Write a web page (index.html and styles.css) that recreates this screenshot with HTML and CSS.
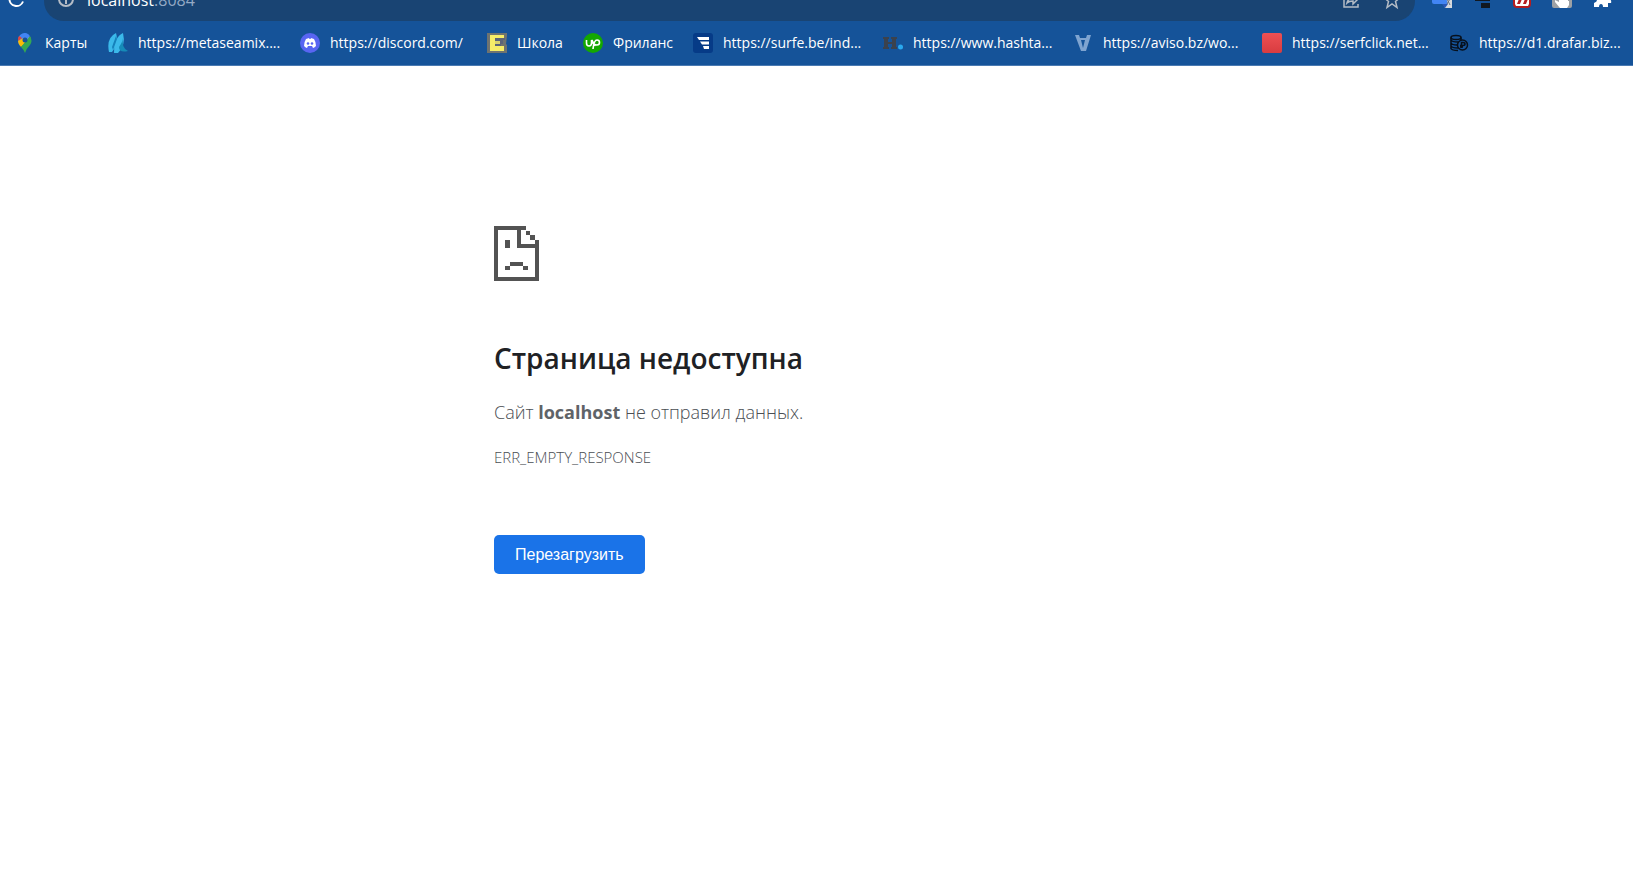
FILE: index.html
```html
<!DOCTYPE html>
<html lang="ru">
<head>
<meta charset="utf-8">
<title>localhost</title>
<link rel="stylesheet" href="styles.css">
</head>
<body>
<header class="browser">
  <div class="toolbar">
    <div class="toolbar-row">
      <button class="icon-button reload" aria-label="Обновить"><svg class="icon" viewBox="0 0 20 20"><path d="M10 1a7 7 0 1 0 7 9.500" fill="none" stroke="#fff" stroke-width="2"/></svg></button>
      <div class="omnibox">
        <svg class="icon" viewBox="0 0 20 20"><circle cx="10" cy="8" r="7" fill="none" stroke="#b4bcc6" stroke-width="2"/><path d="M10 7v6M10 3v2" stroke="#b4bcc6" stroke-width="2"/></svg>
        <p class="address">localhost<span class="port">:8084</span></p>
        <button class="icon-button" aria-label="Поделиться"><svg class="icon" viewBox="0 0 20 20"><path d="M6 3H3v13h14v-3M6 12c1-4 4-5 6-5V3l5 5-5 5v-3c-3 0-4 0-6 2z" fill="none" stroke="#b4bcc6" stroke-width="1.500"/></svg></button>
        <button class="icon-button" aria-label="В закладки"><svg class="icon" viewBox="0 0 20 20"><path d="M10 1l2 5 6 .5-4.500 4 1.500 6-5-3.500-5 3.500 1.500-6L2 6.500 8 6z" fill="none" stroke="#b4bcc6" stroke-width="1.500"/></svg></button>
      </div>
      <div class="extensions">
        <button class="icon-button" aria-label="Переводчик"><svg class="icon" viewBox="0 0 20 20"><path d="M8 2h12v15h-7z" fill="#d5d9de"/><path d="M0 0h12l4 13H2q-2 0-2-2z" fill="#4285f4"/><path d="M10 13h6l-3 4z" fill="#2957b5"/><path d="M15 8l3 6m0-6l-3 5" stroke="#68727d"/></svg></button>
        <button class="icon-button" aria-label="Расширение"><svg class="icon" viewBox="0 0 20 20"><path d="M3 6h15v4H3zM9 12h9v5H9z" fill="#111820"/></svg></button>
        <button class="icon-button" aria-label="Расширение"><svg class="icon" viewBox="0 0 20 20"><rect x="1" y="-2" width="18" height="19" rx="4" fill="#b51d20"/><path d="M3 0h14v13l-1 2H4l-1-2z" fill="#fff"/><path d="M5 13l2-5h3l-2 5zM11 13l2-5h3l-2 5z" fill="#b51d20"/></svg></button>
        <button class="icon-button" aria-label="Расширение"><svg class="icon" viewBox="0 0 20 20"><rect y="-3" width="20" height="20" rx="2" fill="#9da1a5"/><path d="M7 0h3v9h1V7h2v2h1V8h2v2h1v4l-2 3H8l-5-6v-2l4 2z" fill="#fff"/></svg></button>
        <button class="icon-button" aria-label="Расширения"><svg class="icon" viewBox="0 0 20 20"><path d="M2 3h5V1q3-3 5 0v2h5v5q3 1 2 4h-3v4h-5q0-3-2-3t-2 3H2v-4q3-1 3-3T2 7z" fill="#fff"/></svg></button>
      </div>
    </div>
  </div>
  <nav class="bookmarks" aria-label="Закладки">
    <a class="bookmark" href="#"><svg class="icon" viewBox="0 0 20 20"><path d="M10 0a7 7 0 0 0-7 7q0 3 2 6l9-11q-2-2-4-2z" fill="#4285f4"/><path d="M4 3a7 7 0 0 0-1 5l4-3z" fill="#ea4335"/><path d="M3 8q0 3 3 6l10-9-4-2z" fill="#fbbc04"/><path d="M15 3q3 5 0 9-4 4-5 8-1-3-4-6z" fill="#34a853"/><path d="M6 2q5-4 9 1l-4 5z" fill="#4285f4"/><circle cx="10" cy="7" r="2.500" fill="#155399"/></svg><span>Карты</span></a>
    <a class="bookmark" href="#"><svg class="icon" viewBox="0 0 20 20"><path d="M1 19Q-2 5 8 0q3 10-4 19z" fill="#3bb9ea"/><path d="M6 20Q6 4 15 0q3 12-5 20z" fill="#3bb9ea"/><path d="M15 2q-2 13 5 16-9 2-9-4 4-5 4-12z" fill="#168bb8"/><path d="M8 3l1 3-4 11-1-3z" fill="#1681bb"/></svg><span>https://metaseamix....</span></a>
    <a class="bookmark" href="#"><svg class="icon" viewBox="0 0 20 20"><circle cx="10" cy="10" r="10" fill="#5865f2"/><path d="M6 6l3-1 .5 1h1l.5-1 3 1q2 3 2 7-2 2-3 2l-1-2H8l-1 2q-1 0-3-2 0-4 2-7z" fill="#fff"/><circle cx="8" cy="10.500" r="1.300" fill="#5865f2"/><circle cx="12" cy="10.500" r="1.300" fill="#5865f2"/></svg><span>https://discord.com/</span></a>
    <a class="bookmark" href="#"><svg class="icon" viewBox="0 0 20 20"><path d="M0 0h20v3l-1 8 1 1v8H0z" fill="#6f7370"/><path d="M3 2h14v3H8v8h9v5H3z" fill="#f6ed68"/><path d="M8 5h10v2h-2v4h-2v2H8z" fill="#5b6479"/><path d="M8 8h5v3H8z" fill="#d9d36a"/></svg><span>Школа</span></a>
    <a class="bookmark" href="#"><svg class="icon" viewBox="0 0 20 20"><circle cx="10" cy="10" r="10" fill="#14a800"/><path d="M3.500 7v3q0 3 2.500 3t2.500-3V7q2 5 4 5.500M10 16q1-9 4-9 2.500 0 2.500 2.500T14 12q-3 0-5-5" fill="none" stroke="#fff" stroke-width="1.600"/></svg><span>Фриланс</span></a>
    <a class="bookmark" href="#"><svg class="icon" viewBox="0 0 20 20"><rect width="20" height="20" rx="3" fill="#063b87"/><path d="M4 4h12v3H6zM7 8.500h9v3H9zM10 13h6v3h-5z" fill="#fff"/></svg><span>https://surfe.be/ind...</span></a>
    <a class="bookmark" href="#"><svg class="icon" viewBox="0 0 20 20"><path d="M0 4h6v2H5v3h4V6H8V4h6v2h-1v8h1v2H8v-2h1v-3H5v3h1v2H0v-2h1V6H0z" fill="#3b424d"/><circle cx="17.500" cy="14" r="2.500" fill="#2aa8ef"/></svg><span>https://www.hashta...</span></a>
    <a class="bookmark" href="#"><svg class="icon" viewBox="0 0 20 20"><path d="M2 2h4l1 3h6l1-3h4l-5 16H8zM8 7l2 8 2-8z" fill="#7fa4d0" fill-rule="evenodd"/></svg><span>https://aviso.bz/wo...</span></a>
    <a class="bookmark" href="#"><svg class="icon" viewBox="0 0 20 20"><defs><linearGradient id="red" x2="0" y2="1"><stop stop-color="#ee5053"/><stop offset="1" stop-color="#d83c40"/></linearGradient></defs><rect width="20" height="20" rx="2" fill="url(#red)"/></svg><span>https://serfclick.net...</span></a>
    <a class="bookmark" href="#"><svg class="icon" viewBox="0 0 20 20"><g fill="none" stroke="#07101c" stroke-width="1.500"><ellipse cx="7" cy="4.500" rx="5" ry="2"/><path d="M2 4.500v11q1 2 7 2M12 4.500V7M2 7q1 2 7 2M2 10q1 2 6 2M2 13q1 2 7 2"/><circle cx="13.500" cy="12" r="5"/><path d="M12.500 15V9.500H14q2 0 2 1.500t-2 1.500h-3M11 14h3"/></g></svg><span>https://d1.drafar.biz...</span></a>
  </nav>
</header>
<main class="error">
  <svg class="sad-page" viewBox="0 0 45 55" shape-rendering="crispEdges" aria-hidden="true"><path d="M0 0h32v4H27v14h18v37H0zM4 4v47h37V22H23V4zM41 14h4v4h-4zM32 5h4v4h-4zM36 9h5v5h-5zM11 14h5v8h-5zM16 36h13v4H16zM11 40h5v4h-5zM29 40h5v4h-5z" fill="#535353" fill-rule="evenodd"/></svg>
  <h1 class="title">Страница недоступна</h1>
  <p class="summary">Сайт <strong>localhost</strong> не отправил данных.</p>
  <p class="code">ERR_EMPTY_RESPONSE</p>
  <button class="retry">Перезагрузить</button>
</main>
</body>
</html>
```
FILE: styles.css
```css
* { box-sizing: border-box; }

body {
  margin: 0;
  background: #fff;
  color: #4a4e53;
  font-family: "Open Sans", "Noto Sans", sans-serif;
}

button {
  border: 0;
  font: inherit;
  cursor: pointer;
}

.browser {
  background: #155399;
  border-bottom: 1px solid #4a7ab2;
}

.toolbar {
  display: flex;
  align-items: flex-end;
  height: 21px;
  overflow: hidden;
}

.toolbar-row {
  display: flex;
  flex: 1;
  align-items: center;
  height: 40px;
}

.icon {
  display: block;
  flex: none;
  width: 20px;
  height: 20px;
}

.icon-button {
  flex: none;
  padding: 0;
  background: none;
}

.reload { margin: 0 18px 0 6px; }

.omnibox {
  display: flex;
  flex: 1;
  align-items: center;
  gap: 21px;
  height: 40px;
  padding: 0 13px 0 12px;
  border-radius: 20px;
  background: #194473;
}

.address {
  flex: 1;
  margin: 0 0 0 -10px;
  padding-bottom: 2px;
  color: #fff;
  font-size: 16px;
  line-height: 24px;
}

.port { color: #94aac5; }

.extensions {
  display: flex;
  gap: 20px;
  padding: 0 21px 0 17px;
}

.bookmarks {
  display: grid;
  grid-template-columns: 93px 192px 187px 96px 110px 190px 190px 189px 187px 1fr;
  align-items: center;
  height: 44px;
  padding-left: 15px;
}

.bookmark {
  display: flex;
  align-items: center;
  gap: 10px;
  color: #fff;
  font-size: 14px;
  line-height: 20px;
  text-decoration: none;
  white-space: nowrap;
}

.error {
  max-width: 645px;
  margin: 0 auto;
  padding-top: 160px;
}

.sad-page {
  display: block;
  width: 45px;
  height: 55px;
}

.title {
  margin: 55px 0 0;
  color: #202124;
  font-size: 28px;
  font-weight: 600;
  line-height: 44px;
}

.summary {
  margin: 18px 0 0;
  font-size: 18px;
  font-weight: 300;
  line-height: 28px;
}

.summary strong {
  color: #5f6368;
  font-weight: 700;
}

.code {
  margin: 19px 0 0;
  font-size: 15px;
  font-weight: 300;
  line-height: 24px;
}

.retry {
  margin-top: 66px;
  padding: 0 21px;
  border-radius: 5px;
  background: #1a73e8;
  color: #fff;
  font-family: "Liberation Sans", Arial, sans-serif;
  font-size: 16px;
  line-height: 39px;
}
```
